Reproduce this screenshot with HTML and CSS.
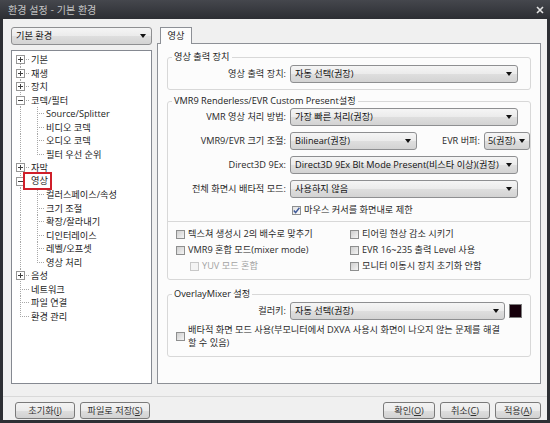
FILE: index.html
```html
<!DOCTYPE html>
<html lang="ko">
<head>
<meta charset="utf-8">
<title>환경 설정 - 기본 환경</title>
<link rel="stylesheet" href="styles.css">
</head>
<body>
<div class="window">
  <div class="titlebar">
    <span class="title">환경 설정 - 기본 환경</span>
    <svg class="close" width="8" height="8" viewBox="0 0 8 8"><path d="M1 1L7 7M7 1L1 7" stroke="#e2e2e2" stroke-width="1.6"/></svg>
  </div>
  <div class="client">
    <div class="main">
      <div class="left">
        <div class="combo"><span>기본 환경</span><i class="arrow"></i></div>
        <div class="tree">
          <div class="tn top first"><svg class="exp" width="9" height="9" viewBox="0 0 9 9"><rect x="0.5" y="0.5" width="8" height="8" fill="#fff" stroke="#969696"/><path d="M2 4.5h5M4.5 2v5" stroke="#404040"/></svg><span>기본</span></div>
          <div class="tn top"><svg class="exp" width="9" height="9" viewBox="0 0 9 9"><rect x="0.5" y="0.5" width="8" height="8" fill="#fff" stroke="#969696"/><path d="M2 4.5h5M4.5 2v5" stroke="#404040"/></svg><span>재생</span></div>
          <div class="tn top"><svg class="exp" width="9" height="9" viewBox="0 0 9 9"><rect x="0.5" y="0.5" width="8" height="8" fill="#fff" stroke="#969696"/><path d="M2 4.5h5M4.5 2v5" stroke="#404040"/></svg><span>장치</span></div>
          <div class="tn top"><svg class="exp" width="9" height="9" viewBox="0 0 9 9"><rect x="0.5" y="0.5" width="8" height="8" fill="#fff" stroke="#969696"/><path d="M2 4.5h5" stroke="#404040"/></svg><span>코덱/필터</span></div>
          <div class="tn child"><span>Source/Splitter</span></div>
          <div class="tn child"><span>비디오 코덱</span></div>
          <div class="tn child"><span>오디오 코덱</span></div>
          <div class="tn child lastchild"><span>필터 우선 순위</span></div>
          <div class="tn top"><svg class="exp" width="9" height="9" viewBox="0 0 9 9"><rect x="0.5" y="0.5" width="8" height="8" fill="#fff" stroke="#969696"/><path d="M2 4.5h5M4.5 2v5" stroke="#404040"/></svg><span>자막</span></div>
          <div class="tn top"><svg class="exp" width="9" height="9" viewBox="0 0 9 9"><rect x="0.5" y="0.5" width="8" height="8" fill="#fff" stroke="#969696"/><path d="M2 4.5h5" stroke="#404040"/></svg><span class="hl">영상</span></div>
          <div class="tn child"><span>컬러스페이스/속성</span></div>
          <div class="tn child"><span>크기 조절</span></div>
          <div class="tn child"><span>확장/잘라내기</span></div>
          <div class="tn child"><span>디인터레이스</span></div>
          <div class="tn child"><span>레벨/오프셋</span></div>
          <div class="tn child lastchild"><span>영상 처리</span></div>
          <div class="tn top"><svg class="exp" width="9" height="9" viewBox="0 0 9 9"><rect x="0.5" y="0.5" width="8" height="8" fill="#fff" stroke="#969696"/><path d="M2 4.5h5M4.5 2v5" stroke="#404040"/></svg><span>음성</span></div>
          <div class="tn top"><span class="noexp"></span><span>네트워크</span></div>
          <div class="tn top"><span class="noexp"></span><span>파일 연결</span></div>
          <div class="tn top last"><span class="noexp"></span><span>환경 관리</span></div>
        </div>
      </div>
      <div class="right">
        <div class="tabs"><div class="tab">영상</div></div>
        <div class="panel">
          <fieldset class="grp g1">
            <legend>영상 출력 장치</legend>
            <div class="gbody">
              <div class="row"><span class="lbl">영상 출력 장치:</span><div class="combo w-full"><span>자동 선택(권장)</span><i class="arrow"></i></div></div>
            </div>
          </fieldset>
          <fieldset class="grp g2">
            <legend>VMR9 Renderless/EVR Custom Present설정</legend>
            <div class="gbody rows">
              <div class="row"><span class="lbl">VMR 영상 처리 방법:</span><div class="combo w-full"><span>가장 빠른 처리(권장)</span><i class="arrow"></i></div></div>
              <div class="row"><span class="lbl">VMR9/EVR 크기 조절:</span><div class="combo w-mid"><span>Bilinear(권장)</span><i class="arrow"></i></div><span class="lbl2">EVR 버퍼:</span><div class="combo w-small"><span>5(권장)</span><i class="arrow"></i></div></div>
              <div class="row"><span class="lbl">Direct3D 9Ex:</span><div class="combo w-full"><span>Direct3D 9Ex Blt Mode Present(비스타 이상)(권장)</span><i class="arrow"></i></div></div>
              <div class="row"><span class="lbl">전체 화면시 배타적 모드:</span><div class="combo w-full"><span>사용하지 않음</span><i class="arrow"></i></div></div>
              <div class="row cbline"><span class="lbl"></span><span class="cb checked"><svg width="9" height="9" viewBox="0 0 9 9"><path d="M1.8 4.6L3.6 6.6L7.4 1.8" fill="none" stroke="#3f5a9a" stroke-width="1.5"/></svg></span><span>마우스 커서를 화면내로 제한</span></div>
            </div>
            <div class="opts">
              <div class="cbrow"><span class="cb"></span><span>텍스쳐 생성시 2의 배수로 맞추기</span></div>
              <div class="cbrow"><span class="cb"></span><span>티어링 현상 감소 시키기</span></div>
              <div class="cbrow"><span class="cb"></span><span>VMR9 혼합 모드(mixer mode)</span></div>
              <div class="cbrow"><span class="cb"></span><span>EVR 16~235 출력 Level 사용</span></div>
              <div class="cbrow disabled sub"><span class="cb"></span><span>YUV 모드 혼합</span></div>
              <div class="cbrow"><span class="cb"></span><span>모니터 이동시 장치 초기화 안함</span></div>
            </div>
          </fieldset>
          <fieldset class="grp g4">
            <legend>OverlayMixer 설정</legend>
            <div class="gbody">
              <div class="row"><span class="lbl">컬러키:</span><div class="combo w-color"><span>자동 선택(권장)</span><i class="arrow"></i></div><span class="swatch"></span></div>
              <div class="cbrow wrap"><span class="cb"></span><span class="wraptext">배타적 화면 모드 사용(부모니터에서 DXVA 사용시 화면이 나오지 않는 문제를 해결<br>할 수 있음)</span></div>
            </div>
          </fieldset>
        </div>
      </div>
    </div>
    <div class="footer">
      <div class="btns">
        <button class="btn b1">초기화(<u>I</u>)</button>
        <button class="btn b2">파일로 저장(<u>S</u>)</button>
      </div>
      <div class="btns">
        <button class="btn b3">확인(<u>O</u>)</button>
        <button class="btn b4">취소(<u>C</u>)</button>
        <button class="btn b5">적용(<u>A</u>)</button>
      </div>
    </div>
  </div>
</div>
</body>
</html>
```

FILE: styles.css
```css
* { box-sizing: border-box; }
html, body { margin: 0; padding: 0; }
body {
  width: 550px;
  height: 423px;
  overflow: hidden;
  background: #2d2f34;
  font-family: "Open Sans", "Noto Sans CJK KR", sans-serif;
  font-size: 9.2px;
  line-height: 12px;
  color: #2a2a2a;
}
.window {
  width: 550px;
  height: 423px;
  display: flex;
  flex-direction: column;
  background: #2d2f34;
}
.titlebar {
  height: 19px;
  flex: none;
  display: flex;
  align-items: center;
  justify-content: space-between;
  padding: 0 6px 0 8px;
  background: linear-gradient(#45474d, #2c2e33);
  color: #c4c4c4;
  font-family: "Noto Sans CJK KR", sans-serif;
  font-size: 10px;
}
.client {
  flex: 1;
  margin: 0 3px 3px;
  background: #f0f0f0;
  display: flex;
  flex-direction: column;
}
.main {
  display: flex;
  height: 365px;
  padding: 8px 0 0 8px;
}
.left {
  width: 141px;
  display: flex;
  flex-direction: column;
  gap: 5px;
}
.combo {
  height: 18px;
  display: flex;
  align-items: center;
  padding-left: 4px;
  border: 1px solid #8e8f91;
  border-radius: 3px;
  background: linear-gradient(#f5f5f5, #ebebeb 50%, #dedede 51%, #d3d3d3);
  color: #111;
  white-space: nowrap;
  overflow: hidden;
}
.arrow {
  margin-left: auto;
  margin-right: 5px;
  flex: none;
  width: 0;
  height: 0;
  border-left: 3px solid transparent;
  border-right: 3px solid transparent;
  border-top: 4px solid #111;
}
.tree {
  flex: 1;
  border: 1px solid #858991;
  background: #fff;
  padding-top: 2px;
  color: #222;
}
.tn {
  height: 13.5px;
  line-height: 13.5px;
  display: flex;
  align-items: center;
  padding-left: 4px;
  white-space: nowrap;
  --dot-v: repeating-linear-gradient(to bottom, #a8a8a8 0 1px, transparent 1px 2px);
  --dot-h: repeating-linear-gradient(to right, #a8a8a8 0 1px, transparent 1px 2px);
}
.tn .exp, .tn .noexp {
  flex: none;
  width: 9px;
  height: 9px;
  margin-right: 6px;
  display: block;
}
.tn.top {
  background:
    var(--dot-v) 8px 0 / 1px 100% no-repeat,
    var(--dot-h) 8px 50% / 10px 1px no-repeat;
}
.tn.top.first {
  background:
    var(--dot-v) 8px 100% / 1px 50% no-repeat,
    var(--dot-h) 8px 50% / 10px 1px no-repeat;
}
.tn.top.last {
  background:
    var(--dot-v) 8px 0 / 1px 50% no-repeat,
    var(--dot-h) 8px 50% / 10px 1px no-repeat;
}
.tn.child {
  padding-left: 34px;
  background:
    var(--dot-v) 8px 0 / 1px 100% no-repeat,
    var(--dot-v) 25px 0 / 1px 100% no-repeat,
    var(--dot-h) 25px 50% / 7px 1px no-repeat;
}
.tn.child.lastchild {
  background:
    var(--dot-v) 8px 0 / 1px 100% no-repeat,
    var(--dot-v) 25px 0 / 1px 50% no-repeat,
    var(--dot-h) 25px 50% / 7px 1px no-repeat;
}
.hl {
  background: #fff;
  margin-left: -6px;
  padding: 0 2px 0 6px;
  line-height: 14px;
  outline: 2px solid #cf1f2a;
}
.right {
  margin-left: 5px;
  width: 384px;
  display: flex;
  flex-direction: column;
}
.tabs {
  height: 16px;
  display: flex;
  padding-left: 3px;
}
.tab {
  width: 32px;
  height: 17px;
  border: 1px solid #8d9096;
  border-bottom: none;
  background: #fcfcfc;
  text-align: center;
  line-height: 15px;
  position: relative;
  z-index: 1;
  color: #222;
}
.panel {
  flex: 1;
  border: 1px solid #8d9096;
  background: #fcfcfc;
  padding: 7px 9px 0;
}
.grp {
  margin: 0;
  padding: 0;
  min-width: 0;
  border: 1px solid #d8d8d8;
  border-radius: 3px;
}
.grp legend {
  margin-left: 4px;
  padding: 0 2px;
  line-height: 12px;
  color: #222;
}
.g1 { margin-bottom: 5px; }
.g2 { margin-bottom: 8px; }
.gbody { padding: 2px 0 6px; }
.rows {
  display: flex;
  flex-direction: column;
  gap: 6px;
  padding: 1px 0 4px;
  border-bottom: 1px solid #d8d8d8;
}
.row {
  display: flex;
  align-items: center;
  height: 18px;
}
.row.cbline { height: 14px; margin-top: -1px; }
.lbl {
  width: 118px;
  margin-right: 4px;
  text-align: right;
  flex: none;
  white-space: nowrap;
}
.lbl2 {
  flex: 1;
  text-align: right;
  margin-right: 4px;
  white-space: nowrap;
}
.w-full { width: 228px; }
.w-mid { width: 127px; }
.w-small { width: 46px; padding-left: 3px; }
.w-small .arrow { margin-right: 4px; }
.w-color { width: 215px; }
.swatch {
  width: 13px;
  height: 14px;
  margin-left: 4px;
  background: #16000b;
  border: 1px solid #7d7d7d;
}
.cb {
  flex: none;
  width: 9px;
  height: 9px;
  margin-right: 3px;
  border: 1px solid #8e8f8f;
  background: linear-gradient(135deg, #cfcfcf, #f4f4f4);
  display: block;
}
.cb svg { display: block; margin: -1px; }
.cb.checked { background: linear-gradient(135deg, #e2e2e2, #fbfbfb); }
.row.cbline .cb { margin-left: 2px; }
.opts {
  display: grid;
  grid-template-columns: 174px 1fr;
  padding: 4px 0 5px 8px;
}
.cbrow {
  display: flex;
  align-items: center;
  height: 16px;
  white-space: nowrap;
}
.cbrow.sub { padding-left: 14px; }
.cbrow.disabled { color: #a3a3a3; }
.cbrow.disabled .cb { border-color: #c8c8c8; background: #f4f4f4; }
.cbrow.wrap {
  height: auto;
  margin-top: 3px;
  padding-left: 8px;
}
.wraptext { line-height: 13px; }
.g4 .gbody { padding: 2px 0 7px; }
.footer {
  margin-top: 12px;
  border-top: 1px solid #d9d9d9;
  padding: 5px 6px 0 12px;
  display: flex;
  justify-content: space-between;
}
.btns { display: flex; gap: 5px; }
.btn {
  height: 17px;
  padding: 0;
  font: inherit;
  line-height: 15px;
  color: #333;
  border: 1px solid #7a7a7a;
  border-radius: 3px;
  background: linear-gradient(#f3f3f3, #ebebeb 50%, #dedede 51%, #d2d2d2);
}
.b1 { width: 60px; }
.b2 { width: 70px; }
.b3 { width: 52px; }
.b4 { width: 50px; }
.b5 { width: 46px; }
```
